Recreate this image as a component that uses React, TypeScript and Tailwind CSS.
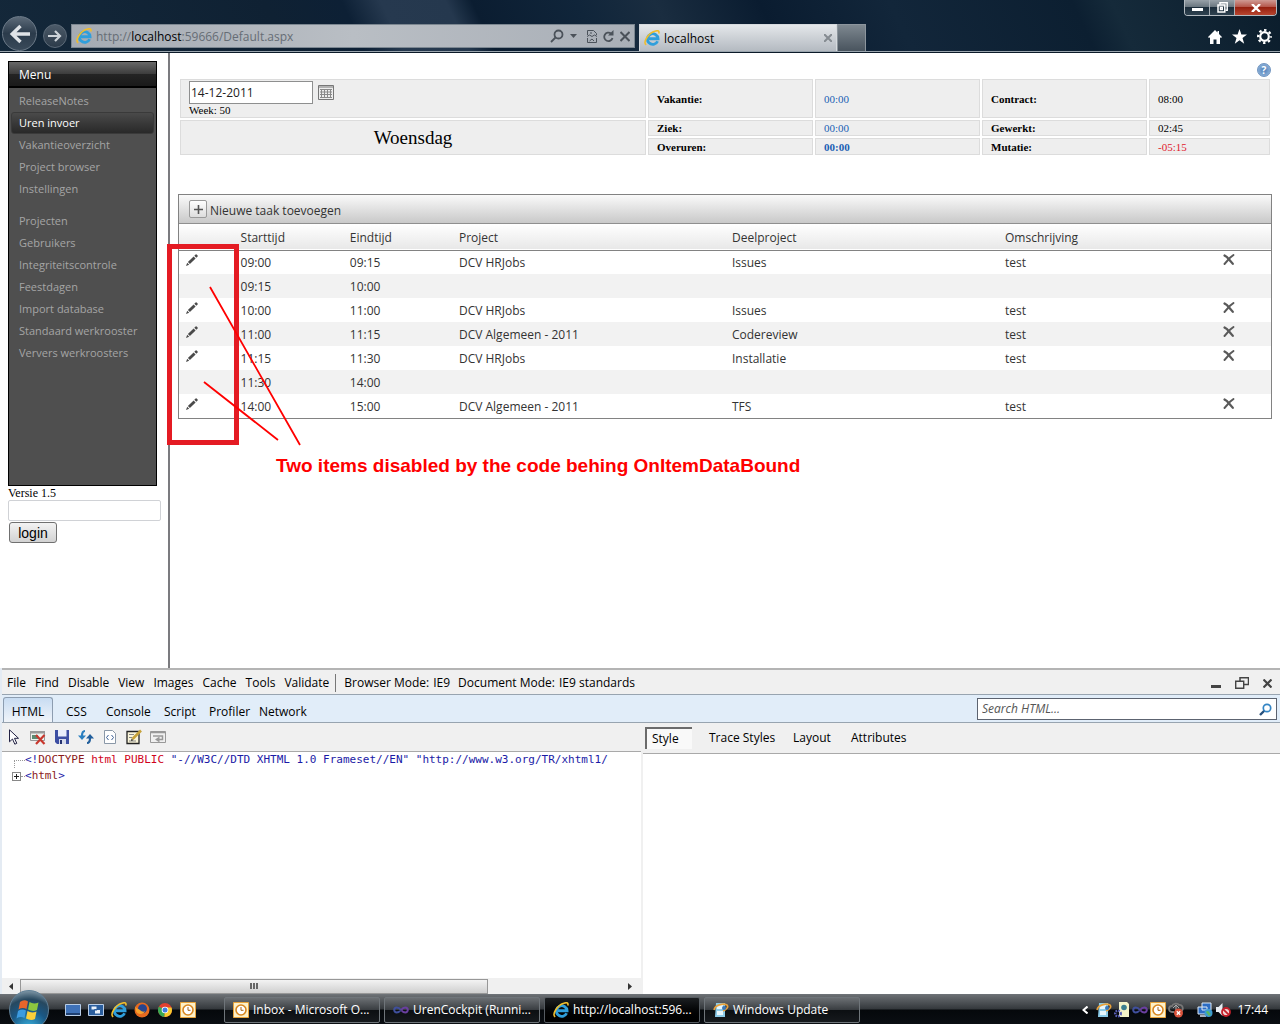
import type { ReactNode } from 'react';

const MENU_MAIN = ['ReleaseNotes', 'Uren invoer', 'Vakantieoverzicht', 'Project browser', 'Instellingen'];
const MENU_ADMIN = [
  'Projecten',
  'Gebruikers',
  'Integriteitscontrole',
  'Feestdagen',
  'Import database',
  'Standaard werkrooster',
  'Ververs werkroosters',
];

type Task = { start: string; end: string; project?: string; sub?: string; note?: string };

const TASKS: Task[] = [
  { start: '09:00', end: '09:15', project: 'DCV HRJobs', sub: 'Issues', note: 'test' },
  { start: '09:15', end: '10:00' },
  { start: '10:00', end: '11:00', project: 'DCV HRJobs', sub: 'Issues', note: 'test' },
  { start: '11:00', end: '11:15', project: 'DCV Algemeen - 2011', sub: 'Codereview', note: 'test' },
  { start: '11:15', end: '11:30', project: 'DCV HRJobs', sub: 'Installatie', note: 'test' },
  { start: '11:30', end: '14:00' },
  { start: '14:00', end: '15:00', project: 'DCV Algemeen - 2011', sub: 'TFS', note: 'test' },
];

export default function App() {
  return (
    <div className="flex min-h-screen flex-col overflow-hidden bg-white font-['Open_Sans','Noto_Sans',sans-serif] text-xs text-black">
      <BrowserBar />
      <main className="flex flex-1">
        <Sidebar />
        <TimeSheet />
      </main>
      <DevTools />
      <Taskbar />
    </div>
  );
}

function BrowserBar() {
  return (
    <header className="flex h-[53px] shrink-0 border-b border-[#0b1a28] bg-[linear-gradient(65deg,#14283a_0%,#0f2133_22%,#0d2035_28%,#26394f_31%,#25384e_36%,#0b1d31_38%,#10253a_46%,#1a2d40_52%,#0a1c30_60%,#12263a_70%,#0c1f31_84%,#152a3a_87%,#0b1d2c_100%)]">
      <div className="flex min-w-0 flex-1 items-end border-b border-[#9aa5ae]">
        <button aria-label="Back" className="ml-0.5 flex size-[35px] shrink-0 items-center justify-center rounded-full border border-[#6c7a88] bg-linear-to-b from-[#5d6b79] via-[#2b3b4b] to-[#3a4a5a]">
          <svg width="22" height="20" viewBox="0 0 22 20" fill="none" stroke="#dfe3e7" strokeWidth="3.4">
            <path d="M21 10H4M11.5 2 3.2 10l8.3 8" />
          </svg>
        </button>
        <button aria-label="Forward" className="mb-[3px] ml-1.5 flex size-6 shrink-0 items-center justify-center rounded-full border border-[#5c6a78] bg-linear-to-b from-[#4c5a68] to-[#2c3b4a]">
          <svg width="14" height="12" viewBox="0 0 14 12" fill="none" stroke="#cdd3d9" strokeWidth="2.2">
            <path d="M0 6h12M7 1l5 5-5 5" />
          </svg>
        </button>
        <div className="mb-[3px] ml-1 flex h-6 w-[564px] items-center border border-[#7c8791] bg-linear-to-r from-[#a5abb3] via-[#b9bec4] to-[#a9afb7] px-1 text-[#666d75]">
          <IeLogo size={16} />
          <span className="ml-1 flex-1 truncate pt-0.5">
            http://<span className="text-black">localhost</span>:59666/Default.aspx
          </span>
          <div className="flex items-center gap-1.5 text-[#4b525a]">
            <svg width="14" height="14" viewBox="0 0 14 14" fill="none" stroke="currentColor" strokeWidth="1.8">
              <circle cx="8.5" cy="5.5" r="4" />
              <path d="M5.5 8.5 1 13" />
            </svg>
            <svg width="7" height="4" viewBox="0 0 7 4" fill="currentColor">
              <path d="M0 0h7L3.5 4z" />
            </svg>
            <svg className="ml-1" width="10" height="13" viewBox="0 0 10 13" fill="none" stroke="currentColor">
              <path d="M.5 5V.5h6l3 3V5M.5 8v4.500h9V8M0 6.500l2.500-1.500L5 6.500l2.500-1.500L10 6.500M3 3h2M2.500 11l2.500-2 2 2" />
            </svg>
            <svg width="11" height="13" viewBox="0 0 11 13" fill="none" stroke="currentColor" strokeWidth="1.8">
              <path d="M9.500 8A4.200 4.200 0 1 1 8 3.500" />
              <path d="M10.500 0v5.500H5z" fill="currentColor" stroke="none" />
            </svg>
            <svg width="10" height="11" viewBox="0 0 10 11" stroke="currentColor" strokeWidth="2">
              <path d="m.5 1 9 9M9.500 1l-9 9" />
            </svg>
          </div>
        </div>
        <div className="ml-1 flex h-[27px] w-[198px] items-center border border-b-0 border-[#d6dade] bg-linear-to-b from-[#e4e7ea] to-[#b4bac1] px-1">
          <IeLogo size={16} />
          <span className="ml-1 flex-1 pt-0.5">localhost</span>
          <svg width="8" height="8" viewBox="0 0 8 8" stroke="#858b91" strokeWidth="2">
            <path d="m0 0 8 8M8 0 0 8" />
          </svg>
        </div>
        <button aria-label="New tab" className="h-[27px] w-[29px] border border-b-0 border-[#8c959d] bg-linear-to-b from-[#7e8890] to-[#49545e]" />
      </div>
      <div className="flex w-[104px] shrink-0 flex-col items-end justify-between border-b border-[#9aa5ae]">
        <div className="mr-[3px] flex h-4 overflow-hidden rounded-b border border-t-0 border-[#b3bac0]">
          <button aria-label="Minimize" className="flex w-[25px] items-end justify-center border-r border-[#a8b0b7] bg-[linear-gradient(#98a1a8,#6b7780_45%,#1c2d3b_50%,#2f4250)] pb-1">
            <span className="h-[3px] w-[11px] bg-white" />
          </button>
          <button aria-label="Restore" className="flex w-[25px] items-center justify-center border-r border-[#a8b0b7] bg-[linear-gradient(#98a1a8,#6b7780_45%,#1c2d3b_50%,#2f4250)]">
            <svg width="11" height="11" viewBox="0 0 11 11" fill="none" stroke="#fff" strokeWidth="1.500">
              <path d="M3 2.500V.8h7.200v7.400H8.500" />
              <path d="M1 3h6.800v7H1zM3.500 5.500h1.800v2H3.500z" />
            </svg>
          </button>
          <button aria-label="Close" className="flex w-[41px] items-center justify-center bg-[linear-gradient(#cf9a93,#b5574b_45%,#96200f_50%,#b8452f)]">
            <svg width="10" height="8" viewBox="0 0 10 8" stroke="#fff" strokeWidth="2.400">
              <path d="m1 0 8 8M9 0 1 8" />
            </svg>
          </button>
        </div>
        <div className="mr-2 mb-[7px] flex items-center gap-2.5 text-white">
          <svg width="14" height="14" viewBox="0 0 14 14" fill="currentColor">
            <path d="M7 0 0 7l1 1 1-.8V14h3.500V9.500h3V14H12V7.200l1 .8 1-1-3-3V1H9.500v1.500z" />
          </svg>
          <svg width="15" height="15" viewBox="0 0 15 15" fill="currentColor">
            <path d="m7.500 0 1.900 5.500H15l-4.500 3.500 1.700 5.700-4.700-3.400-4.700 3.400L4.500 9 0 5.500h5.600z" />
          </svg>
          <svg width="15" height="15" viewBox="0 0 15 15" fill="none" stroke="currentColor">
            <circle cx="7.500" cy="7.500" r="4.300" strokeWidth="2.200" />
            <circle cx="7.500" cy="7.500" r="6.400" strokeWidth="2.200" strokeDasharray="2.400 2.626" strokeDashoffset="1.200" />
          </svg>
        </div>
      </div>
    </header>
  );
}

function IeLogo({ size }: { size: number }) {
  return (
    <svg width={size} height={size} viewBox="0 0 18 18" fill="none" className="shrink-0">
      <path d="M15.300 12.600A6 6 0 1 1 15.800 9.800H5.500" stroke="#2f9fdc" strokeWidth="3.200" />
      <path d="M2.500 16.800C-1.500 14 4.500 4 12 1.500c4-1.500 5.500-.3 4.600 2.500" stroke="#f0bd2c" strokeWidth="1.800" />
    </svg>
  );
}

function Sidebar() {
  return (
    <aside className="w-[170px] shrink-0 border-r-2 border-[#7b7b7f] pt-2 pl-2">
      <nav className="h-[425px] w-[149px] border border-black bg-[#4f4f4f]">
        <h2 className="h-[26px] border-b-2 border-black bg-[linear-gradient(#686868,#3c3c3c_50%,#242424_51%,#1a1a1a)] pt-px pl-2.5 leading-6 text-white">Menu</h2>
        <MenuList items={MENU_MAIN} active="Uren invoer" />
        <MenuList items={MENU_ADMIN} />
      </nav>
      <div className="font-['Liberation_Serif',serif] leading-[14px]">Versie 1.5</div>
      <input aria-label="Login" className="block h-[21px] w-[153px] rounded-xs border border-[#d0d2d6] px-1" />
      <button className="mt-px ml-px h-[21px] w-12 rounded-[3px] border border-[#707070] bg-linear-to-b from-[#f3f3f3] to-[#d2d2d2] font-['Liberation_Sans',sans-serif] text-sm leading-4">
        login
      </button>
    </aside>
  );
}

function MenuList({ items, active }: { items: string[]; active?: string }) {
  return (
    <ul className="mt-0.5 mb-2.5 px-0.5 text-[11px]">
      {items.map((item) => (
        <li key={item}>
          <a
            href="#"
            className={
              item === active
                ? 'block h-[22px] rounded-[3px] border border-[#3a3a3a] bg-linear-to-b from-[#4a4a4a] to-[#292929] pl-[7px] leading-5 text-white'
                : 'block h-[22px] pl-2 leading-[22px] text-[#a5a5a5]'
            }
          >
            {item}
          </a>
        </li>
      ))}
    </ul>
  );
}

function TimeSheet() {
  return (
    <section className="relative min-w-0 flex-1 pr-2 pl-2">
      <div className="flex h-6 items-end justify-end">
        <button aria-label="Help" className="mr-px flex size-3.5 items-center justify-center rounded-full border border-[#6f93bf] bg-radial from-[#4f7fb8] to-[#9fc0e2] text-[10px] leading-none font-bold text-white">
          ?
        </button>
      </div>
      <Summary />
      <TaskGrid />
      <Annotation />
    </section>
  );
}

function Cell({ children, blue }: { children: ReactNode; blue?: boolean }) {
  return <td className={blue ? 'border border-[#dcdcdc] bg-[#eee] pl-2 text-[#1a5fb4]' : 'border border-[#dcdcdc] bg-[#eee] pl-2'}>{children}</td>;
}

function Head({ children }: { children: ReactNode }) {
  return (
    <th scope="row" className="border border-[#dcdcdc] bg-[#eee] pl-2 text-left font-bold">
      {children}
    </th>
  );
}

function Summary() {
  return (
    <table className="w-full table-fixed border-separate border-spacing-0.5 font-['Liberation_Serif',serif] text-[11px] leading-[14px]">
      <colgroup>
        <col />
        <col className="w-[165px]" />
        <col className="w-[165px]" />
        <col className="w-[165px]" />
        <col className="w-[121px]" />
      </colgroup>
      <tbody>
        <tr className="h-[39px]">
          <td className="border border-[#dcdcdc] bg-[#eee] pl-2">
            <div className="flex items-center">
              <input
                aria-label="Datum"
                defaultValue="14-12-2011"
                className="h-[23px] w-[124px] border border-[#8e8f8f] bg-white px-px font-['Open_Sans',sans-serif] text-xs text-[#222]"
              />
              <svg className="ml-[5px]" width="16" height="15" viewBox="0 0 16 15" fill="none" stroke="#777">
                <path d="M.5.500h15v14H.5zM0 2h16" />
                <path d="M3.500 4v9M6.500 4v9M9.500 4v9M12.500 4v9M2 4.500h12M2 7h12M2 9.500h12M2 12.500h12" stroke="#8a8a8a" />
              </svg>
            </div>
            <div className="leading-3">Week: 50</div>
          </td>
          <Head>Vakantie:</Head>
          <Cell blue>00:00</Cell>
          <Head>Contract:</Head>
          <Cell>08:00</Cell>
        </tr>
        <tr className="h-4">
          <td rowSpan={2} className="border border-[#dcdcdc] bg-[#eee] text-center text-[19px]">
            Woensdag
          </td>
          <Head>Ziek:</Head>
          <Cell blue>00:00</Cell>
          <Head>Gewerkt:</Head>
          <Cell>02:45</Cell>
        </tr>
        <tr className="h-[17px]">
          <Head>Overuren:</Head>
          <Cell blue>
            <b>00:00</b>
          </Cell>
          <Head>Mutatie:</Head>
          <Cell>
            <span className="text-[#e0202c]">-05:15</span>
          </Cell>
        </tr>
      </tbody>
    </table>
  );
}

function TaskGrid() {
  return (
    <div className="mt-[37px] border border-[#828282] text-[#333]">
      <div className="flex h-[29px] items-center border-b border-[#8f8f8f] bg-linear-to-b from-[#fafafa] to-[#c9c9c9] pl-2.5">
        <button className="flex items-center gap-[3px]">
          <span className="flex size-[18px] items-center justify-center rounded-xs border border-[#9a9a9a] bg-linear-to-b from-white to-[#ddd]">
            <svg width="9" height="9" viewBox="0 0 9 9" stroke="#555" strokeWidth="1.600">
              <path d="M0 4.500h9M4.500 0v9" />
            </svg>
          </span>
          <span className="pt-[3px]">Nieuwe taak toevoegen</span>
        </button>
      </div>
      <table className="w-full table-fixed border-collapse text-left">
        <thead>
          <tr className="h-[26px] border-b border-[#828282] bg-linear-to-b from-white to-[#e8e8e8]">
            <th className="w-[5%]" />
            <th className="w-[10%] pt-0.5 pl-[7px] font-normal">Starttijd</th>
            <th className="w-[10%] pt-0.5 pl-[7px] font-normal">Eindtijd</th>
            <th className="w-[25%] pt-0.5 pl-[7px] font-normal">Project</th>
            <th className="w-[25%] pt-0.5 pl-[7px] font-normal">Deelproject</th>
            <th className="w-[20%] pt-0.5 pl-[7px] font-normal">Omschrijving</th>
            <th className="w-[5%]" />
          </tr>
        </thead>
        <tbody>
          {TASKS.map((task) => (
            <tr key={task.start} className="h-6 odd:bg-white even:bg-[#f2f2f2]">
              <td className="pb-1 pl-[7px]">
                {task.project && (
                  <button aria-label="Bewerken" className="block">
                    <PencilIcon />
                  </button>
                )}
              </td>
              <td className="pt-0.5 pl-[7px]">{task.start}</td>
              <td className="pt-0.5 pl-[7px]">{task.end}</td>
              <td className="pt-0.5 pl-[7px]">{task.project}</td>
              <td className="pt-0.5 pl-[7px]">{task.sub}</td>
              <td className="pt-0.5 pl-[7px]">{task.note}</td>
              <td className="pb-1.5 pl-[7px]">
                {task.project && (
                  <button aria-label="Verwijderen" className="block">
                    <svg width="12" height="11" viewBox="0 0 12 11" fill="none" stroke="#5a5a5a" strokeLinecap="round">
                      <path d="M1.500 1.500 4 3.200 9.800 9.800" strokeWidth="2.200" />
                      <path d="M10.500 1 7 3.800 1.500 10" strokeWidth="1.900" />
                    </svg>
                  </button>
                )}
              </td>
            </tr>
          ))}
        </tbody>
      </table>
    </div>
  );
}

function PencilIcon() {
  return (
    <svg width="12" height="12" viewBox="0 0 12 12" fill="#4a4a4a">
      <path d="M0 12 1.200 8.800 3.200 10.800zM1.900 8.100 7.600 2.400 9.600 4.400 3.900 10.100zM8.300 1.700 9.600.4q.5-.5 1 0l1 1q.5.5 0 1L10.300 3.700z" />
    </svg>
  );
}

// Red markup drawn over the page.
function Annotation() {
  return (
    <div className="pointer-events-none absolute top-[191px] -left-[3px] text-[#f00]">
      <svg width="140" height="202" viewBox="0 0 140 202" fill="none">
        <rect x="2.500" y="2.500" width="67" height="196" stroke="#e41b23" strokeWidth="5" />
        <path d="M43 43l90 158M37 138l74 58" stroke="#f00" strokeWidth="1.800" />
      </svg>
      <p className="ml-[109px] pt-2 font-['Liberation_Sans',sans-serif] text-[19px] leading-6 font-bold whitespace-nowrap">
        Two items disabled by the code behing OnItemDataBound
      </p>
    </div>
  );
}

function DevTools() {
  return (
    <section className="shrink-0 border-l-2 border-[#e4ebf3] bg-[#f0f0f0]">
      <div className="flex h-[27px] items-center border-t-2 border-b border-t-[#b4b4b4] border-b-[#98a4b0] pt-0.5 pr-2 pl-[5px]">
        <div className="flex gap-[9px]">
          {['File', 'Find', 'Disable', 'View', 'Images', 'Cache', 'Tools', 'Validate'].map((item) => (
            <button key={item}>{item}</button>
          ))}
        </div>
        <div className="ml-1.5 flex h-[18px] items-center gap-2 border-l border-[#777] pl-2">
          <button className="flex gap-1">
            Browser Mode: <span>IE9</span>
          </button>
          <button className="flex gap-1">
            Document Mode: <span>IE9 standards</span>
          </button>
        </div>
        <div className="ml-auto flex items-center gap-3.5">
          <button aria-label="Minimize tools" className="mt-1.5 h-[3px] w-2.5 bg-[#444]" />
          <button aria-label="Unpin tools">
            <svg width="14" height="12" viewBox="0 0 14 12" fill="none" stroke="#444">
              <path d="M5 4V.8h8.500v6.700H9" strokeWidth="1.500" />
              <path d="M.7 4.200h8v7h-8z" strokeWidth="1.400" />
            </svg>
          </button>
          <button aria-label="Close tools">
            <svg width="9" height="9" viewBox="0 0 9 9" stroke="#444" strokeWidth="2.200">
              <path d="m.5.500 8 8M8.500.500l-8 8" />
            </svg>
          </button>
        </div>
      </div>
      <div className="flex h-7 items-end border-b border-[#98a4b0] bg-[#e1edf9] pr-[3px]">
        <button className="ml-px h-[25px] w-[50px] rounded-t-[3px] border border-b-0 border-[#8d9db0] bg-linear-to-b from-[#c8dcf2] to-[#f0f4f9] pt-1 leading-5">HTML</button>
        <div className="ml-[13px] flex h-[25px] items-center pt-1">
          <button className="w-10 text-left">CSS</button>
          <button className="w-[58px] text-left">Console</button>
          <button className="w-[45px] text-left">Script</button>
          <button className="w-[50px] text-left">Profiler</button>
          <button className="text-left">Network</button>
        </div>
        <label className="mb-0.5 ml-auto flex h-[22px] w-[300px] items-center border border-[#5c6370] bg-white px-1">
          <input aria-label="Search HTML" placeholder="Search HTML..." className="min-w-0 flex-1 italic outline-none placeholder:text-[#555]" />
          <svg width="13" height="13" viewBox="0 0 13 13" fill="none">
            <path d="M5.500 7.500 1 12" stroke="#27507c" strokeWidth="2.400" />
            <circle cx="8" cy="5" r="3.700" stroke="#3485c4" strokeWidth="1.700" />
          </svg>
        </label>
      </div>
      <div className="flex min-h-[271px]">
        <div className="flex w-1/2 min-w-0 flex-col">
          <div className="flex h-[29px] items-center gap-2 border-b border-[#a9a9a9] pl-1">
            <ToolIcons />
          </div>
          <div className="flex-1 overflow-hidden bg-white pl-2 font-['DejaVu_Sans_Mono',monospace] text-[11px] leading-4">
            <div className="flex h-4 whitespace-nowrap">
              <span className="mt-2 ml-1 h-2 w-[11px] shrink-0 border-t border-l border-dotted border-[#999]" />
              <span>
                <span className="text-[#2222a8]">&lt;!</span>
                <span className="text-[#8b1a1a]">DOCTYPE</span> <span className="text-[#d0021b]">html PUBLIC</span>{' '}
                <span className="text-[#1a1aa6]">"-//W3C//DTD XHTML 1.0 Frameset//EN" "http://www.w3.org/TR/xhtml1/</span>
              </span>
            </div>
            <div className="flex h-4 items-center">
              <button aria-label="Expand html" className="ml-0.5 flex size-[9px] items-center justify-center border border-[#888]">
                <svg width="5" height="5" viewBox="0 0 5 5" stroke="#222">
                  <path d="M0 2.500h5M2.500 0v5" />
                </svg>
              </button>
              <span className="w-1 border-t border-dotted border-[#999]" />
              <span className="text-[#2222a8]">
                &lt;<span className="text-[#8b1a1a]">html</span>&gt;
              </span>
            </div>
          </div>
          <div className="flex h-4 items-center bg-[#f0f0f0]">
            <svg className="mr-[7px] ml-1.5" width="5" height="7" viewBox="0 0 5 7" fill="#333">
              <path d="M5 0v7L1 3.500z" />
            </svg>
            <div className="flex h-[15px] w-[468px] items-center justify-center gap-px border border-[#979797] bg-linear-to-b from-[#f3f3f3] to-[#cfcfcf]">
              <span className="h-1.5 w-0.5 bg-[#666]" />
              <span className="h-1.5 w-0.5 bg-[#666]" />
              <span className="h-1.5 w-0.5 bg-[#666]" />
            </div>
            <svg className="mr-2 ml-auto" width="5" height="7" viewBox="0 0 5 7" fill="#333">
              <path d="M0 0v7l4-3.500z" />
            </svg>
          </div>
        </div>
        <div className="ml-0.5 flex min-w-0 flex-1 flex-col">
          <div className="flex h-[31px] items-center border-b border-[#a9a9a9] pl-0.5">
            <button className="h-[22px] w-[47px] border-t-2 border-l-2 border-[#6b6b6b] bg-[#f9f9f9] pl-[5px] text-left">Style</button>
            <button className="ml-[17px] w-[84px] text-left">Trace Styles</button>
            <button className="w-[58px] text-left">Layout</button>
            <button className="text-left">Attributes</button>
          </div>
          <div className="flex-1 bg-white" />
        </div>
      </div>
    </section>
  );
}

function ToolIcons() {
  return (
    <>
      <button aria-label="Select element">
        <svg width="16" height="16" viewBox="0 0 16 16">
          <path d="M3.500.800v12l3-2.800 2.300 5.200 2-.9L8.500 9.300h4z" fill="#fff" stroke="#222244" />
        </svg>
      </button>
      <button aria-label="Clear browser cache">
        <svg width="16" height="16" viewBox="0 0 16 16" fill="none">
          <path d="M.5 2.500h14v9H.5z" fill="#eef2ee" stroke="#999" />
          <path d="M0 2h15v2.500H0z" fill="#999" />
          <path d="M2 6h6v4H2z" fill="#5c8a72" />
          <path d="m6 6 8.500 9M14.500 6 6 15" stroke="#c8372d" strokeWidth="2.200" />
        </svg>
      </button>
      <button aria-label="Save">
        <svg width="16" height="16" viewBox="0 0 16 16">
          <path d="M1 1h14v14H3l-2-2z" fill="#3d4fa3" />
          <path d="M4 1h8.500v6.500H4z" fill="#e9eefb" />
          <path d="M5 10h7v5H5z" fill="#d7dcec" />
          <path d="M6 11h2v4H6z" fill="#26336f" />
        </svg>
      </button>
      <button aria-label="Refresh">
        <svg width="16" height="16" viewBox="0 0 16 16" fill="none">
          <path d="M7 2C4.500 2 4 4 4 7" stroke="#2a7fc0" strokeWidth="2.200" />
          <path d="M0 6.500h8L4 11z" fill="#2a7fc0" />
          <path d="M9 14c2.500 0 3-2 3-5" stroke="#225f9c" strokeWidth="2.200" />
          <path d="M8 9.500h8L12 5z" fill="#225f9c" />
        </svg>
      </button>
      <button aria-label="View source">
        <svg width="16" height="16" viewBox="0 0 16 16" fill="none">
          <path d="M2.500 1.500h8l3 3v10h-11z" fill="#fff" stroke="#8a98a8" />
          <path d="M6.500 6 4.500 8.500l2 2.500M9.500 6l2 2.500-2 2.500" stroke="#3b5f96" />
        </svg>
      </button>
      <button aria-label="Edit">
        <svg width="16" height="16" viewBox="0 0 16 16" fill="none">
          <path d="M1 2.500h12v12H1z" fill="#fbf6da" stroke="#222" strokeWidth="1.300" />
          <path d="M3 5.500h5M3 8.500h3M3 12h7" stroke="#888" />
          <path d="M6.500 10 15 1.500" stroke="#c7a23a" strokeWidth="2.600" />
          <path d="m5 12 .6-2.400 1.700 1.700z" fill="#222" />
        </svg>
      </button>
      <button aria-label="Word wrap">
        <svg width="16" height="16" viewBox="0 0 16 16" fill="none">
          <path d="M.5 2.500h15v11H.5z" stroke="#999" />
          <path d="M.5 3.500h15M3 7h9.500v3.500H9" stroke="#999" strokeWidth="1.500" />
          <path d="M9.500 7.500v6L5 10.500z" fill="#999" />
        </svg>
      </button>
    </>
  );
}

function OutlookIcon() {
  return (
    <svg width="16" height="16" viewBox="0 0 16 16" fill="none" className="shrink-0">
      <path d="M.5.500h15v15H.5z" fill="#fdf0c8" stroke="#e8a33a" />
      <circle cx="8" cy="8" r="5" fill="#fff" stroke="#d8861f" strokeWidth="1.600" />
      <path d="M8 5v3.300h2.500" stroke="#a5631a" />
    </svg>
  );
}

function VisualStudioIcon() {
  return (
    <svg width="16" height="16" viewBox="0 0 16 16" fill="none" strokeWidth="2" className="shrink-0">
      <path d="M8 8C6 5.500 4.800 5.500 3.700 5.500a2.500 2.500 0 0 0 0 5C4.800 10.500 6 10.500 8 8" stroke="#3f4f9d" />
      <path d="M8 8c2-2.500 3.200-2.500 4.300-2.500a2.500 2.500 0 0 1 0 5C11.200 10.500 10 10.500 8 8" stroke="#6a3fa0" />
    </svg>
  );
}

function UpdateIcon() {
  return (
    <svg width="16" height="16" viewBox="0 0 16 16" fill="none" className="shrink-0">
      <path d="M3 1h9v14H2z" fill="#8ccbe8" />
      <path d="M4 3h6v4H4zM4 9h6v4H4z" fill="#e7f6fc" />
      <path d="M1 8C2 3 10 1 14 3c2 2-1 5-4 6" stroke="#e9a13b" strokeWidth="1.600" />
      <circle cx="11" cy="6" r="2" fill="#3b78b8" />
    </svg>
  );
}

const WINDOWS = [
  { label: 'Inbox - Microsoft O...', icon: <OutlookIcon /> },
  { label: 'UrenCockpit (Runni...', icon: <VisualStudioIcon /> },
  { label: 'http://localhost:596...', icon: <IeLogo size={16} />, active: true },
  { label: 'Windows Update', icon: <UpdateIcon /> },
];

function Taskbar() {
  return (
    <footer className="flex h-[30px] shrink-0 items-center border-t border-[#6d7277] bg-[linear-gradient(#6a6e72,#34383c_48%,#05080b_52%,#0a0e12)] pr-3 text-white">
      <button aria-label="Start" className="relative z-10 ml-[9px] flex size-10 shrink-0 items-center justify-center rounded-full border border-[#5f7f96] bg-[radial-gradient(circle_at_50%_100%,#39b5e2,#1a5784_45%,#27485f_70%,#a9bcc8)]">
        <svg width="26" height="24" viewBox="0 0 26 24">
          <path d="M4 4q4-3 8-.5L10.500 11q-4-2-8 .5z" fill="#e7652b" />
          <path d="M13.500 4q4 2.500 9 .5L21 12q-4 2-9-.5z" fill="#8dc63f" />
          <path d="M2 13q4-2.500 8-.5L8.500 20q-4-2-8 .5z" fill="#3c9be0" />
          <path d="M11.500 13q4 2.500 9 .5L19 21q-4 2-9-.5z" fill="#fbcf3a" />
        </svg>
      </button>
      <div className="ml-4 flex w-[159px] shrink-0 items-center gap-[7px]">
        <svg width="16" height="14" viewBox="0 0 16 14">
          <path d="M.5 1.500h15v11H.5z" fill="#3f72b8" stroke="#b8cde6" />
          <path d="M1 10h14v2H1z" fill="#1e3f70" />
        </svg>
        <svg width="16" height="14" viewBox="0 0 16 14">
          <path d="M.5 1.500h15v11H.5z" fill="#2a5e9e" stroke="#b8cde6" />
          <path d="M3 3h6v4H3zM6.500 6.500h6v4.500h-6z" fill="#e9f1fa" stroke="#2a5e9e" />
        </svg>
        <IeLogo size={16} />
        <svg width="16" height="16" viewBox="0 0 16 16">
          <circle cx="8" cy="8" r="7.500" fill="#e66a1f" />
          <circle cx="8.500" cy="6.800" r="4.500" fill="#27458f" />
          <path d="M1 4c1 3 3 2 5 4s4 2 5 1c-1 4-8 4-9 0z" fill="#f6a32c" />
        </svg>
        <svg width="16" height="16" viewBox="0 0 16 16">
          <circle cx="8" cy="8" r="7" fill="#e2402f" />
          <path d="M8 8 1.900 4.500A7 7 0 0 0 7.500 15z" fill="#38a852" />
          <path d="M8 8l-.5 7A7 7 0 0 0 14.500 5.500H8z" fill="#f7ca2e" />
          <circle cx="8" cy="8" r="3.300" fill="#fff" />
          <circle cx="8" cy="8" r="2.500" fill="#3f7de0" />
        </svg>
        <OutlookIcon />
      </div>
      <div className="flex gap-1">
        {WINDOWS.map((w) => (
          <button
            key={w.label}
            className={
              w.active
                ? 'flex h-[26px] w-[156px] items-center gap-1 rounded-xs border border-[#555b60] bg-linear-to-b from-[#1c1f22] to-[#000] px-2'
                : 'flex h-[26px] w-[156px] items-center gap-1 rounded-xs border border-[#6f757a] bg-[linear-gradient(#6b6f73,#3a3e42_48%,#0c0f12_52%,#16191d)] px-2'
            }
          >
            {w.icon}
            <span className="whitespace-nowrap">{w.label}</span>
          </button>
        ))}
      </div>
      <div className="ml-auto flex items-center gap-0.5">
        <svg className="mr-1.5" width="6" height="8" viewBox="0 0 6 8" fill="none" stroke="#fff" strokeWidth="2">
          <path d="M5.500.500 1.500 4l4 3.500" />
        </svg>
        <UpdateIcon />
        <svg width="16" height="16" viewBox="0 0 16 16">
          <path d="M5 0h8l2 2v13H5z" fill="#f4f3c9" />
          <circle cx="10" cy="5.500" r="2.800" fill="#3c7f8f" />
          <circle cx="4" cy="11.500" r="2.800" fill="none" stroke="#5a61b8" strokeWidth="2.400" strokeDasharray="1.600 1" />
        </svg>
        <VisualStudioIcon />
        <OutlookIcon />
        <svg width="17" height="16" viewBox="0 0 17 16" fill="none">
          <path d="M6 10H4a3 3 0 0 1 0-6c1-3 6-3 7-1 4-1 5 5 2 6" stroke="#777" strokeWidth="1.800" />
          <path d="M8 3v6M5 6l3-3 3 3" stroke="#aaa" />
          <circle cx="10.500" cy="11" r="4.500" fill="#d9533c" />
          <path d="m8.800 9.300 3.400 3.400M12.200 9.300l-3.400 3.400" stroke="#fff" strokeWidth="1.300" />
        </svg>
        <svg className="ml-2.5" width="16" height="16" viewBox="0 0 16 16">
          <path d="M5 1h9v7H5zM1 5h9v7H1z" fill="#2b6cc4" stroke="#dce9f7" />
          <path d="M3 14h6" stroke="#dce9f7" strokeWidth="1.500" />
          <circle cx="11.500" cy="11" r="4" fill="#3d9bd0" />
          <path d="M9 10q2-2 3 0t2 2l-2 2z" fill="#5bb85c" />
        </svg>
        <svg width="16" height="16" viewBox="0 0 16 16">
          <path d="M1 5h2.500L7.500 1v13L3.500 10H1z" fill="#e8edf2" />
          <circle cx="11" cy="10" r="4" fill="#f3d6d6" stroke="#c5202a" strokeWidth="1.800" />
          <path d="m8.300 7.300 5.400 5.400" stroke="#c5202a" strokeWidth="1.800" />
        </svg>
        <time className="ml-1">17:44</time>
      </div>
    </footer>
  );
}
